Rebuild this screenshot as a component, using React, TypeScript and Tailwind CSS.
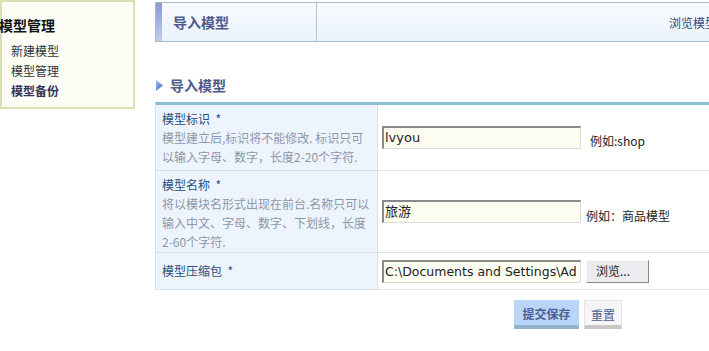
import React from 'react';

const font = "font-['SimSun','Noto_Sans_CJK_SC',sans-serif]";

function Sidebar() {
  return (
    <div className="w-[135px] h-[109px] shrink-0 border-2 border-[#d7e1b4] bg-[#fdfdf6] pt-[14px]">
      <div className="text-[14px] font-bold leading-[18px] text-[#111] -ml-[3px]">模型管理</div>
      <ul className="mt-[7px] pl-[9px] text-[12px] leading-[20px] text-[#333]">
        <li>新建模型</li>
        <li>模型管理</li>
        <li className="font-bold text-[#33335a]">模型备份</li>
      </ul>
    </div>
  );
}

function Row({ label, desc, children, tall, center }: { label: string; desc?: React.ReactNode; children: React.ReactNode; tall?: string; center?: boolean }) {
  return (
    <div className={`flex border-b border-[#d8e0e8] ${tall ?? ''}`}>
      <div className={`w-[222px] shrink-0 bg-[#eef4fd] border-r border-[#d8e0e8] pl-[6px] pr-[4px] ${center ? 'flex items-center' : 'pt-[5px] pb-[5px]'}`}>
        <div className="text-[12px] leading-[18px] text-[#1d4f86]">{label}&nbsp;&nbsp;*</div>
        {desc && <div className="text-[12px] leading-[19px] text-[#8c97aa] whitespace-nowrap">{desc}</div>}
      </div>
      <div className="flex flex-1 items-center pl-[4px]">{children}</div>
    </div>
  );
}

function TextBox({ value, small }: { value: string; small?: boolean }) {
  return (
    <div className={`w-[199px] h-[23px] shrink-0 bg-[#fdfdf2] border-t-2 border-l-2 border-t-[#8a8a8a] border-l-[#8a8a8a] border-b border-r border-b-[#dcdcdc] border-r-[#dcdcdc] pl-[1px] leading-[20px] text-[#222] overflow-hidden whitespace-nowrap font-['DejaVu_Sans','Noto_Sans_CJK_SC',sans-serif] ${small ? 'text-[12.5px]' : 'text-[13px]'}`}>
      {value}
    </div>
  );
}

export default function App() {
  return (
    <div className={`w-[709px] h-[351px] overflow-hidden bg-white flex ${font}`}>
      <Sidebar />
      <div className="flex-1 pl-[20px] pt-[2px] min-w-0">
        <div className="flex h-[40px] border-y border-[#a9bcc9] bg-gradient-to-b from-[#f8fbff] to-[#eaf2fb]">
          <div className="w-[7px] border-l border-[#a9bcc9] bg-gradient-to-b from-[#8b98d6] to-[#c4cdee]" />
          <div className="w-[155px] border-r border-[#b3c4d2] pl-[11px] pt-[9px] text-[14px] font-bold text-[#4e5a8c]">导入模型</div>
          <div className="flex-1 flex justify-end pt-[11px] text-[12px] text-[#3a4a70] whitespace-nowrap overflow-hidden">
            <span className="-mr-[8px]">浏览模型</span>
          </div>
        </div>

        <div className="mt-[34px] flex items-center h-[18px] pl-[1px]">
          <svg width="8" height="11" viewBox="0 0 8 11" className="mr-[6px]">
            <defs>
              <linearGradient id="tri" x1="0" y1="0" x2="1" y2="1">
                <stop offset="0" stopColor="#9fc3ef" />
                <stop offset="1" stopColor="#3463b8" />
              </linearGradient>
            </defs>
            <path d="M0 0 L7 5.5 L0 11 Z" fill="url(#tri)" />
          </svg>
          <span className="text-[14px] font-bold text-[#4e5a8c]">导入模型</span>
        </div>

        <div className="mt-[8px] border-t-[3px] border-[#8dbfd3] border-l border-l-[#d8e0e8]">
          <Row label="模型标识" desc={<>模型建立后,标识将不能修改. 标识只可<br />以输入字母、数字，长度2-20个字符.</>} tall="h-[66px]">
            <TextBox value="lvyou" />
            <span className="ml-[9px] mt-[6px] text-[12px] text-[#222]">例如:shop</span>
          </Row>
          <Row label="模型名称" desc={<>将以模块名形式出现在前台.名称只可以<br />输入中文、字母、数字、下划线，长度<br />2-60个字符.</>} tall="h-[82px]">
            <TextBox value="旅游" />
            <span className="ml-[5px] mt-[8px] text-[12px] text-[#222]">例如：商品模型</span>
          </Row>
          <Row label="模型压缩包" tall="h-[37px]" center>
            <TextBox value="C:\Documents and Settings\Ad" small />
            <div className="ml-[5px] w-[63px] h-[23px] shrink-0 bg-[#ececf0] border border-t-[#f8f8f8] border-l-[#f8f8f8] border-b-[#888] border-r-[#888] text-[12px] leading-[20px] pl-[9px] text-[#222]">浏览...</div>
          </Row>
        </div>

        <div className="flex mt-[10px] pl-[359px] gap-[5px]">
          <div className="w-[65px] h-[29px] bg-[#b9d5f9] border-b-[4px] border-[#8eb5c9] text-[12px] font-bold text-[#4f5d92] flex items-center justify-center pt-[3px]">提交保存</div>
          <div className="w-[38px] h-[29px] bg-[#f5f5f5] border border-[#e4e4e4] border-b-[4px] border-b-[#c8c8c8] text-[12px] text-[#4f5d92] flex items-center justify-center pt-[3px]">重置</div>
        </div>
      </div>
    </div>
  );
}
